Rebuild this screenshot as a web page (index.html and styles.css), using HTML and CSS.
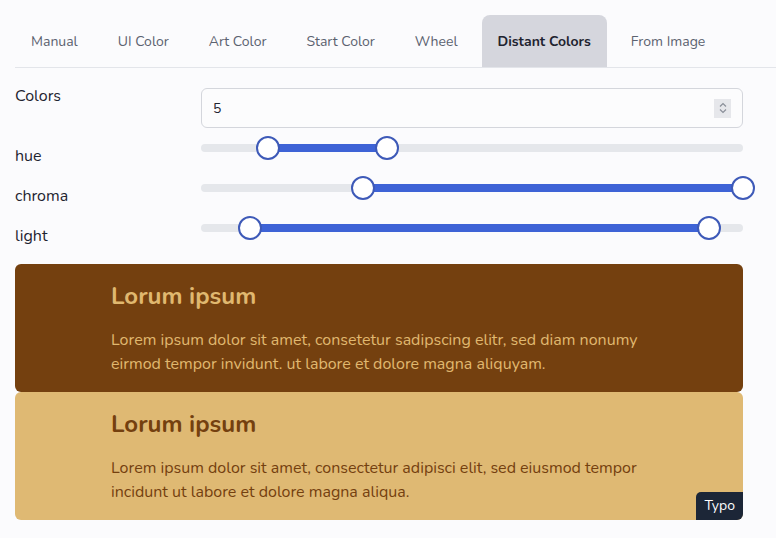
FILE: index.html
```html
<!DOCTYPE html>
<html lang="en">
<head>
  <meta charset="UTF-8">
  <title>Distant Colors</title>
  <link rel="stylesheet" href="styles.css">
</head>
<body>

  <nav class="tabs">
    <div class="tab">Manual</div>
    <div class="tab">UI Color</div>
    <div class="tab">Art Color</div>
    <div class="tab">Start Color</div>
    <div class="tab">Wheel</div>
    <div class="tab active">Distant Colors</div>
    <div class="tab">From Image</div>
  </nav>

  <div class="form">
    <label class="label label-top">Colors</label>
    <div class="number-input">
      <span>5</span>
      <div class="spinner">
        <svg width="12" height="16" viewBox="0 0 12 16">
          <path d="M3 6.5 L6 3.5 L9 6.5" fill="none" stroke="#8a8f99" stroke-width="1.2"/>
          <path d="M3 9.5 L6 12.5 L9 9.5" fill="none" stroke="#8a8f99" stroke-width="1.2"/>
        </svg>
      </div>
    </div>

    <label class="label">hue</label>
    <div class="range">
      <div class="track">
        <div class="fill" style="left: 12.4%; width: 21.9%;"></div>
        <div class="thumb" style="left: 12.4%;"></div>
        <div class="thumb" style="left: 34.3%;"></div>
      </div>
    </div>

    <label class="label">chroma</label>
    <div class="range">
      <div class="track">
        <div class="fill" style="left: 29.9%; width: 70.1%;"></div>
        <div class="thumb" style="left: 29.9%;"></div>
        <div class="thumb" style="left: 100%;"></div>
      </div>
    </div>

    <label class="label">light</label>
    <div class="range">
      <div class="track">
        <div class="fill" style="left: 9%; width: 84.7%;"></div>
        <div class="thumb" style="left: 9%;"></div>
        <div class="thumb" style="left: 93.7%;"></div>
      </div>
    </div>
  </div>

  <div class="preview">
    <div class="card card-dark">
      <h2>Lorum ipsum</h2>
      <p>Lorem ipsum dolor sit amet, consetetur sadipscing elitr, sed diam nonumy<br>eirmod tempor invidunt. ut labore et dolore magna aliquyam.</p>
    </div>
    <div class="card card-light">
      <h2>Lorum ipsum</h2>
      <p>Lorem ipsum dolor sit amet, consectetur adipisci elit, sed eiusmod tempor<br>incidunt ut labore et dolore magna aliqua.</p>
      <span class="badge">Typo</span>
    </div>
  </div>

</body>
</html>
```

FILE: styles.css
```css
html {
  background-color: #fbfbfd;
}
html, body {
  margin: 0px;
  padding: 0px;
}
body {
  font-family: "Nunito", Lato, "Open Sans", sans-serif;
  color: #1f2937;
  padding: 15px 33px 0 15px;
}
.tabs {
  display: flex;
  gap: 8px;
  border-bottom: 1px solid #e3e5ea;
  margin-right: -33px;
}
.tab {
  padding: 1px 16px 0;
  height: 52px;
  box-sizing: border-box;
  line-height: 51px;
  font-size: 14px;
  color: #5b6270;
  border-radius: 8px 8px 0 0;
}
.tab.active {
  background-color: #d5d6dd;
  color: #1f2430;
  font-weight: bold;
}
.form {
  display: grid;
  grid-template-columns: 186px 1fr;
  grid-auto-rows: 40px;
  margin-top: 20px;
}
.label {
  font-size: 16px;
  color: #1f2430;
  padding-top: 20px;
  line-height: 16px;
}
.label-top {
  padding-top: 0;
}
.number-input {
  height: 38px;
  border: 1px solid #d4d6dc;
  border-radius: 6px;
  background: #fcfcfd;
  display: flex;
  align-items: center;
  justify-content: space-between;
  padding: 0 11px 0 11px;
  font-size: 14px;
  color: #1f2430;
}
.spinner {
  width: 17px;
  height: 19px;
  background: #e6e7eb;
  display: flex;
  align-items: center;
  justify-content: center;
}
.range {
  display: flex;
  align-items: flex-end;
  padding-bottom: 16px;
  box-sizing: border-box;
}
.track {
  position: relative;
  width: 100%;
  height: 8px;
  border-radius: 4px;
  background: #e5e7eb;
}
.fill {
  position: absolute;
  top: 0;
  bottom: 0;
  background: #3e63d6;
}
.thumb {
  position: absolute;
  top: 50%;
  width: 20px;
  height: 20px;
  margin: -12px 0 0 -12px;
  border: 2px solid #3e5ab8;
  border-radius: 50%;
  background: #fff;
}
.preview {
  margin-top: 16px;
  display: flex;
  flex-direction: column;
}
.card {
  position: relative;
  border-radius: 6px;
  padding: 16px 96px;
}
.card h2 {
  margin: 0 0 16px 0;
  font-size: 24px;
  line-height: 32px;
}
.card p {
  margin: 0;
  font-size: 16px;
  line-height: 24px;
}
.card-dark {
  background: #74400f;
  color: #e0b86f;
}
.card-light {
  background: #dfb973;
  color: #74400f;
}
.badge {
  position: absolute;
  right: 0;
  bottom: 0;
  background: #1c2637;
  color: #fff;
  font-size: 14px;
  padding: 4px 8px 5px;
  border-radius: 5px 0 6px 0;
}
```
